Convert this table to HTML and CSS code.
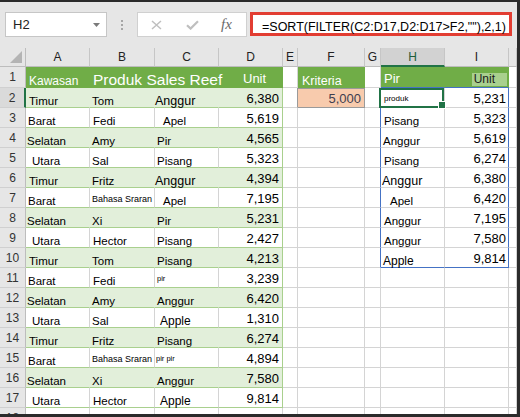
FILE: index.html
```html
<!DOCTYPE html>
<html lang="id">
<head>
  <meta charset="UTF-8">
  <meta name="viewport" content="width=device-width, initial-scale=1.0">
  <title>SORT FILTER</title>
  <link rel="stylesheet" href="styles.css">
</head>
<body>
  <div class="frame">
    <div class="toolbar">
      <div class="namebox">
        <span>H2</span>
        <svg class="drop" width="7" height="4" viewBox="0 0 7 4"><path d="M0 0H7L3.5 4Z" fill="#7a7a7a"/></svg>
      </div>
      <div class="grip"><i></i><i></i><i></i></div>
      <div class="fxbox">
        <svg class="ico-x" width="11" height="10" viewBox="0 0 11 10"><path d="M1 1L10 9M10 1L1 9" stroke="#bfbfbf" stroke-width="1.5" fill="none"/></svg>
        <svg class="ico-ok" width="13" height="10" viewBox="0 0 13 10"><path d="M1 5.2L4.6 8.6L12 1.2" stroke="#bfbfbf" stroke-width="2.2" fill="none"/></svg>
        <span class="fx">fx</span>
      </div>
      <div class="formula">=SORT(FILTER(C2:D17,D2:D17&gt;F2,""),2,1)</div>
    </div>

    <div class="sheet">
      <div class="row hdr">
        <div class="c corner"><svg width="12" height="12" viewBox="0 0 12 12"><path d="M12 0V12H0Z" fill="#b4b4b4"/></svg></div>
        <div class="c">A</div>
        <div class="c">B</div>
        <div class="c">C</div>
        <div class="c">D</div>
        <div class="c">E</div>
        <div class="c">F</div>
        <div class="c">G</div>
        <div class="c on">H</div>
        <div class="c">I</div>
        <div class="c"></div>
      </div>

      <div class="row r1">
        <div class="c rh">1</div>
        <div class="c g p3 f12">Kawasan</div>
        <div class="c g p3"><span class="title">Produk Sales Reef</span></div>
        <div class="c g"></div>
        <div class="c g d1">Unit</div>
        <div class="c"></div>
        <div class="c g crit-h">Kriteria</div>
        <div class="c"></div>
        <div class="c g sp-t pir">Pir</div>
        <div class="c g sp-t unit"><span class="tag">Unit</span></div>
        <div class="c"></div>
      </div>

      <div class="row s">
        <div class="c rh on">2</div>
        <div class="c t p3">Timur</div>
        <div class="c t">Tom</div>
        <div class="c t big p0">Anggur</div>
        <div class="c t last n">6,380</div>
        <div class="c crit-l"></div>
        <div class="c n crit">5,000</div>
        <div class="c sp-l"></div>
        <div class="c sel mini p3">produk</div>
        <div class="c n sp-r pr2">5,231</div>
        <div class="c"></div>
      </div>

      <div class="row">
        <div class="c rh">3</div>
        <div class="c t">Barat</div>
        <div class="c t p3">Fedi</div>
        <div class="c t p8">Apel</div>
        <div class="c t last n">5,619</div>
        <div class="c"></div>
        <div class="c"></div>
        <div class="c sp-l"></div>
        <div class="c p3">Pisang</div>
        <div class="c n sp-r pr2">5,323</div>
        <div class="c"></div>
      </div>

      <div class="row s">
        <div class="c rh">4</div>
        <div class="c t p1">Selatan</div>
        <div class="c t">Amy</div>
        <div class="c t">Pir</div>
        <div class="c t last n">4,565</div>
        <div class="c"></div>
        <div class="c"></div>
        <div class="c sp-l"></div>
        <div class="c">Anggur</div>
        <div class="c n sp-r pr2">5,619</div>
        <div class="c"></div>
      </div>

      <div class="row">
        <div class="c rh">5</div>
        <div class="c t p6">Utara</div>
        <div class="c t">Sal</div>
        <div class="c t">Pisang</div>
        <div class="c t last n">5,323</div>
        <div class="c"></div>
        <div class="c"></div>
        <div class="c sp-l"></div>
        <div class="c p3">Pisang</div>
        <div class="c n sp-r pr2">6,274</div>
        <div class="c"></div>
      </div>

      <div class="row s">
        <div class="c rh">6</div>
        <div class="c t p3">Timur</div>
        <div class="c t">Fritz</div>
        <div class="c t big p0">Anggur</div>
        <div class="c t last n">4,394</div>
        <div class="c"></div>
        <div class="c"></div>
        <div class="c sp-l"></div>
        <div class="c big p1">Anggur</div>
        <div class="c n sp-r pr2">6,380</div>
        <div class="c"></div>
      </div>

      <div class="row">
        <div class="c rh">7</div>
        <div class="c t">Barat</div>
        <div class="c t small">Bahasa Sraran</div>
        <div class="c t p8">Apel</div>
        <div class="c t last n">7,195</div>
        <div class="c"></div>
        <div class="c"></div>
        <div class="c sp-l"></div>
        <div class="c p9">Apel</div>
        <div class="c n sp-r pr2">6,420</div>
        <div class="c"></div>
      </div>

      <div class="row s">
        <div class="c rh">8</div>
        <div class="c t p1">Selatan</div>
        <div class="c t">Xi</div>
        <div class="c t">Pir</div>
        <div class="c t last n">5,231</div>
        <div class="c"></div>
        <div class="c"></div>
        <div class="c sp-l"></div>
        <div class="c p3">Anggur</div>
        <div class="c n sp-r pr2">7,195</div>
        <div class="c"></div>
      </div>

      <div class="row">
        <div class="c rh">9</div>
        <div class="c t p6">Utara</div>
        <div class="c t p3">Hector</div>
        <div class="c t">Pisang</div>
        <div class="c t last n">2,427</div>
        <div class="c"></div>
        <div class="c"></div>
        <div class="c sp-l"></div>
        <div class="c p3">Anggur</div>
        <div class="c n sp-r pr2">7,580</div>
        <div class="c"></div>
      </div>

      <div class="row s">
        <div class="c rh">10</div>
        <div class="c t p3">Timur</div>
        <div class="c t">Tom</div>
        <div class="c t">Pisang</div>
        <div class="c t last n">4,213</div>
        <div class="c"></div>
        <div class="c"></div>
        <div class="c sp-l"></div>
        <div class="c sp-b f12">Apple</div>
        <div class="c n sp-r sp-b pr2">9,814</div>
        <div class="c"></div>
      </div>

      <div class="row">
        <div class="c rh">11</div>
        <div class="c t">Barat</div>
        <div class="c t p3">Fedi</div>
        <div class="c t tiny">pir</div>
        <div class="c t last n">3,239</div>
        <div class="c"></div>
        <div class="c"></div>
        <div class="c"></div>
        <div class="c"></div>
        <div class="c"></div>
        <div class="c"></div>
      </div>

      <div class="row s">
        <div class="c rh">12</div>
        <div class="c t p1">Selatan</div>
        <div class="c t">Amy</div>
        <div class="c t">Anggur</div>
        <div class="c t last n">6,420</div>
        <div class="c"></div>
        <div class="c"></div>
        <div class="c"></div>
        <div class="c"></div>
        <div class="c"></div>
        <div class="c"></div>
      </div>

      <div class="row">
        <div class="c rh">13</div>
        <div class="c t p6">Utara</div>
        <div class="c t">Sal</div>
        <div class="c t p5 f12">Apple</div>
        <div class="c t last n">1,310</div>
        <div class="c"></div>
        <div class="c"></div>
        <div class="c"></div>
        <div class="c"></div>
        <div class="c"></div>
        <div class="c"></div>
      </div>

      <div class="row s">
        <div class="c rh">14</div>
        <div class="c t p3">Timur</div>
        <div class="c t">Fritz</div>
        <div class="c t">Pisang</div>
        <div class="c t last n">6,274</div>
        <div class="c"></div>
        <div class="c"></div>
        <div class="c"></div>
        <div class="c"></div>
        <div class="c"></div>
        <div class="c"></div>
      </div>

      <div class="row">
        <div class="c rh">15</div>
        <div class="c t">Barat</div>
        <div class="c t small">Bahasa Sraran</div>
        <div class="c t tiny p1">pir pir</div>
        <div class="c t last n">4,894</div>
        <div class="c"></div>
        <div class="c"></div>
        <div class="c"></div>
        <div class="c"></div>
        <div class="c"></div>
        <div class="c"></div>
      </div>

      <div class="row s">
        <div class="c rh">16</div>
        <div class="c t p1">Selatan</div>
        <div class="c t">Xi</div>
        <div class="c t">Anggur</div>
        <div class="c t last n">7,580</div>
        <div class="c"></div>
        <div class="c"></div>
        <div class="c"></div>
        <div class="c"></div>
        <div class="c"></div>
        <div class="c"></div>
      </div>

      <div class="row">
        <div class="c rh">17</div>
        <div class="c t p6">Utara</div>
        <div class="c t p3">Hector</div>
        <div class="c t p5 f12">Apple</div>
        <div class="c t last n">9,814</div>
        <div class="c"></div>
        <div class="c"></div>
        <div class="c"></div>
        <div class="c"></div>
        <div class="c"></div>
        <div class="c"></div>
      </div>

      <div class="row">
        <div class="c rh">18</div>
        <div class="c"></div>
        <div class="c"></div>
        <div class="c"></div>
        <div class="c"></div>
        <div class="c"></div>
        <div class="c"></div>
        <div class="c"></div>
        <div class="c"></div>
        <div class="c"></div>
        <div class="c"></div>
      </div>
    </div>
  </div>
</body>
</html>
```

FILE: styles.css
```css
*{
  margin: 0;
  padding: 0;
  box-sizing: border-box;
}
body{
  font-family: "Liberation Sans", Arial, sans-serif;
}
.frame{
  width: 520px;
  height: 417px;
  overflow: hidden;
  background: #e6e6e6;
  border-top: 2px solid #2b2b2b;
  border-right: 3px solid #2b2b2b;
  border-bottom: 3px solid #2b2b2b;
}

/* formula bar */
.toolbar{
  display: flex;
  align-items: flex-start;
  height: 46px;
  padding-top: 10px;
}
.namebox{
  display: flex;
  align-items: center;
  width: 102px;
  height: 25px;
  margin-left: 5px;
  padding: 0 6px 0 7px;
  background: #fff;
  border: 1px solid #c6c6c6;
  font-size: 13px;
  color: #222;
}
.namebox .drop{
  margin-left: auto;
}
.grip{
  display: flex;
  flex-direction: column;
  gap: 2px;
  margin: 8px 0 0 14px;
}
.grip i{
  width: 2px;
  height: 2px;
  background: #a6a6a6;
}
.fxbox{
  display: flex;
  align-items: center;
  width: 110px;
  height: 25px;
  margin-left: 14px;
  padding-left: 13px;
  background: #fff;
  border: 1px solid #d0d0d0;
}
.ico-ok{
  margin-left: 24px;
}
.fx{
  margin-left: 22px;
  font-family: "Liberation Serif", serif;
  font-style: italic;
  font-size: 15px;
  color: #6a6a6a;
}
.formula{
  display: flex;
  align-items: flex-end;
  width: 262px;
  height: 24px;
  margin-left: 3px;
  padding-left: 9px;
  background: #fff;
  border: 3px solid #e23d32;
  font-size: 12.5px;
  line-height: 1;
  white-space: nowrap;
}

/* grid */
.row{
  display: grid;
  grid-template-columns: 26px 64px 65px 64px 64px 15px 67px 16px 64px 64px 1fr;
  height: 20px;
}
.hdr{
  height: 19px;
}
.r1{
  height: 21px;
}
.c{
  display: flex;
  align-items: flex-end;
  padding-left: 2px;
  background: #fff;
  border-right: 1px solid #d4d4d4;
  border-bottom: 1px solid #d4d4d4;
  font-size: 11.5px;
  line-height: 1;
  color: #000;
  white-space: nowrap;
}
.hdr .c{
  justify-content: center;
  align-items: center;
  padding: 0;
  background: #e6e6e6;
  border-right-color: #c6c6c6;
  border-bottom-color: #bdbdbd;
  font-size: 12px;
  color: #222;
}
.hdr .corner{
  justify-content: flex-end;
  align-items: flex-end;
  padding: 0 3px 3px 0;
  border-right-color: #bdbdbd;
}
.hdr .on{
  background: #d2d2d2;
  border-bottom: 2px solid #217346;
  color: #1d5e3a;
}
.rh{
  justify-content: center;
  align-items: center;
  padding: 0;
  background: #e6e6e6;
  border-right-color: #bdbdbd;
  border-bottom-color: #d0d0d0;
  font-size: 12px;
  color: #333;
}
.rh.on{
  background: #dadada;
  border-right: 2px solid #217346;
}

/* table A1:D17 */
.t{
  border-bottom-color: #a9d08e;
}
.s .t{
  background: #e2efda;
  border-right-color: #e2efda;
}
.t.last{
  border-right-color: #a9d08e;
}
.g{
  background: #70ad47;
  color: #fff;
  border-right-color: #70ad47;
  border-bottom-color: #70ad47;
}
.title{
  position: relative;
  z-index: 1;
  font-size: 15.5px;
}
.d1{
  padding: 0 0 2px 24px;
  font-size: 13px;
}
.crit-h{
  padding-left: 4px;
  font-size: 12.5px;
}
.pir{
  padding: 0 0 2px 3px;
  font-size: 13px;
}
.unit{
  justify-content: flex-end;
  padding-right: 1px;
}
.tag{
  margin-bottom: 1px;
  padding: 0 12px 0 2px;
  background: #a9d08e;
  color: #1a1a1a;
  font-size: 12px;
  line-height: 13px;
}

/* numbers */
.n{
  justify-content: flex-end;
  padding: 0 3px 2px 0;
  font-size: 13px;
}
.pr2{
  padding-right: 2px;
}

/* criteria cell */
.crit{
  background: #f8cbad;
  border-right-color: #9a9a9a;
  border-bottom-color: #9a9a9a;
  box-shadow: inset 0 1px 0 #9a9a9a;
  color: #3d3d4f;
}
.crit-l{
  border-right-color: #9a9a9a;
}

/* spill range H2:I10 */
.sp-l, .sp-r{
  border-right-color: #4472c4;
}
.sp-t, .sp-b{
  border-bottom-color: #4472c4;
}
.sel{
  position: relative;
  z-index: 1;
}
.sel::before{
  content: "";
  position: absolute;
  left: -2px;
  top: 0;
  right: 0;
  bottom: -1px;
  border: 2px solid #217346;
}
.sel::after{
  content: "";
  position: absolute;
  right: -2px;
  bottom: -2px;
  width: 6px;
  height: 6px;
  background: #217346;
  border: 1px solid #fff;
}

/* text tweaks */
.p0{ padding-left: 0; }
.p1{ padding-left: 1px; }
.p3{ padding-left: 3px; }
.p5{ padding-left: 5px; }
.p6{ padding-left: 6px; }
.p8{ padding-left: 8px; }
.p9{ padding-left: 9px; }
.big{ font-size: 12.5px; }
.f12{ font-size: 12px; }
.small{
  font-size: 9px;
  padding-bottom: 3px;
}
.tiny{
  font-size: 7.5px;
  padding-bottom: 5px;
}
.mini{
  font-size: 8px;
  padding-bottom: 4px;
}
```
